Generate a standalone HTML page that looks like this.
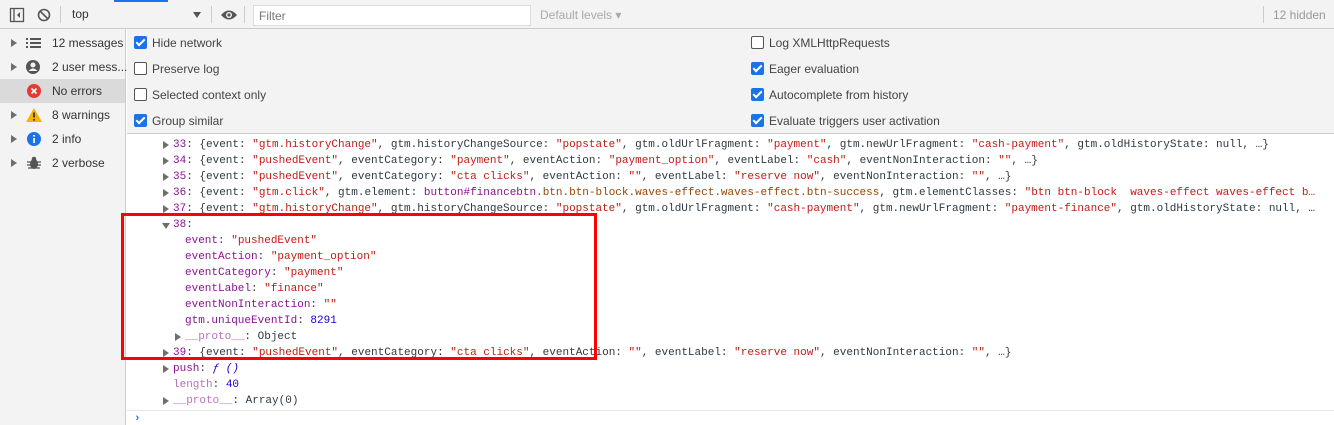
<!DOCTYPE html>
<html><head><meta charset="utf-8"><style>
*{margin:0;padding:0;box-sizing:border-box}
body{width:1334px;height:425px;overflow:hidden;background:#fff;font-family:"Liberation Sans",sans-serif;font-size:12px;color:#303942;position:relative}
.abs{position:absolute}
#tb{left:0;top:0;width:1334px;height:29px;background:#f3f3f3;border-bottom:1px solid #ccc}
.sep{position:absolute;top:6px;width:1px;height:17px;background:#ccc}
#side{left:0;top:29px;width:126px;height:396px;background:#f3f3f3;border-right:1px solid #ccc}
.sr{position:absolute;left:0;width:125px;height:24px;line-height:24px;font-size:12px;color:#333}
.sr .t{position:absolute;left:52px;white-space:nowrap}
.tri{position:absolute;width:0;height:0;border-top:4px solid transparent;border-bottom:4px solid transparent;border-left:6px solid #6e6e6e}
#set{left:127px;top:29px;width:1207px;height:105px;background:#f3f3f3;border-bottom:1px solid #ccc}
.cb{position:absolute;width:13px;height:13px;border-radius:2px}
.cb.on{background:#1a73e8}
.cb.off{border:1px solid #555;background:#fff}
.cb.on::after{content:"";position:absolute;left:4px;top:1px;width:3px;height:7px;border:solid #fff;border-width:0 2px 2px 0;transform:rotate(45deg)}
.cl{position:absolute;font-size:12px;color:#444}
#con{left:127px;top:135px;width:1207px;height:290px;font-family:"Liberation Mono",monospace;font-size:11px;white-space:pre;overflow:hidden}
.ln{position:absolute;height:16px;line-height:16px}
.s{color:#c41a16}.p{color:#881391}.n{color:#1c00cf}.k{color:#303942}.b{color:#994500}.g{color:#999}
.dt{position:absolute;width:0;height:0;border-top:4px solid transparent;border-bottom:4px solid transparent;border-left:6px solid #6e6e6e}
.dd{position:absolute;width:0;height:0;border-left:4px solid transparent;border-right:4px solid transparent;border-top:6px solid #6e6e6e}
</style></head><body>
<div id="tb" class="abs">
  <div class="abs" style="left:114px;top:0;width:54px;height:2px;background:#1a73e8"></div>
  <svg class="abs" style="left:9px;top:7px" width="16" height="16" viewBox="0 0 16 16"><rect x="1.5" y="1.5" width="13" height="13" fill="none" stroke="#555" stroke-width="1.3"/><line x1="5" y1="2" x2="5" y2="14" stroke="#555" stroke-width="1.3"/><path d="M11 5 L8 8 L11 11Z" fill="#555"/></svg>
  <svg class="abs" style="left:37px;top:8px" width="14" height="14" viewBox="0 0 14 14"><circle cx="7" cy="7" r="5.5" fill="none" stroke="#555" stroke-width="1.6"/><line x1="3" y1="3" x2="11" y2="11" stroke="#555" stroke-width="1.6"/></svg>
  <div class="sep" style="left:60px"></div>
  <div class="abs" style="left:72px;top:7px;color:#333">top</div>
  <div class="dd" style="left:193px;top:12px;border-top-color:#555"></div>
  <div class="sep" style="left:211px"></div>
  <svg class="abs" style="left:220px;top:9px" width="18" height="12" viewBox="0 0 18 12"><path d="M1 6 Q9 -3 17 6 Q9 15 1 6Z" fill="#555"/><circle cx="9" cy="6" r="3" fill="#f3f3f3"/><circle cx="9" cy="6" r="1.6" fill="#555"/></svg>
  <div class="sep" style="left:244px"></div>
  <div class="abs" style="left:253px;top:5px;width:278px;height:21px;background:#fff;border:1px solid #ddd;padding:3px 5px;color:#757575">Filter</div>
  <div class="abs" style="left:540px;top:8px;color:#aaa">Default levels ▾</div>
  <div class="sep" style="left:1263px"></div>
  <div class="abs" style="left:1273px;top:8px;color:#999">12 hidden</div>
</div>
<div id="side" class="abs">
  <div class="sr" style="top:2px"><div class="tri" style="left:11px;top:8px"></div>
    <svg class="abs" style="left:26px;top:7px" width="16" height="10"><g fill="#555"><rect x="0" y="0" width="2" height="2"/><rect x="4" y="0" width="11" height="2"/><rect x="0" y="4" width="2" height="2"/><rect x="4" y="4" width="11" height="2"/><rect x="0" y="8" width="2" height="2"/><rect x="4" y="8" width="11" height="2"/></g></svg>
    <span class="t">12 messages</span></div>
  <div class="sr" style="top:26px"><div class="tri" style="left:11px;top:8px"></div>
    <svg class="abs" style="left:26px;top:5px" width="14" height="14"><circle cx="7" cy="7" r="7" fill="#555"/><circle cx="7" cy="5" r="2.5" fill="#f3f3f3"/><path d="M2.5 11 Q7 6 11.5 11" fill="#f3f3f3"/></svg>
    <span class="t">2 user mess...</span></div>
  <div class="sr" style="top:50px;background:#dadada">
    <svg class="abs" style="left:27px;top:5px" width="14" height="14"><circle cx="7" cy="7" r="7" fill="#e53935"/><path d="M4.5 4.5L9.5 9.5M9.5 4.5L4.5 9.5" stroke="#fff" stroke-width="1.6"/></svg>
    <span class="t">No errors</span></div>
  <div class="sr" style="top:74px"><div class="tri" style="left:11px;top:8px"></div>
    <svg class="abs" style="left:26px;top:5px" width="16" height="14"><path d="M8 0 L16 14 L0 14Z" fill="#f4b400"/><rect x="7.2" y="4.5" width="1.6" height="5" fill="#222"/><rect x="7.2" y="11" width="1.6" height="1.6" fill="#222"/></svg>
    <span class="t">8 warnings</span></div>
  <div class="sr" style="top:98px"><div class="tri" style="left:11px;top:8px"></div>
    <svg class="abs" style="left:27px;top:5px" width="14" height="14"><circle cx="7" cy="7" r="7" fill="#1a73e8"/><rect x="6.2" y="6" width="1.7" height="5" fill="#fff"/><rect x="6.2" y="3" width="1.7" height="1.7" fill="#fff"/></svg>
    <span class="t">2 info</span></div>
  <div class="sr" style="top:122px"><div class="tri" style="left:11px;top:8px"></div>
    <svg class="abs" style="left:27px;top:5px" width="14" height="14"><ellipse cx="7" cy="8" rx="4" ry="5" fill="#555"/><circle cx="7" cy="3" r="2.3" fill="#555"/><path d="M0 6h14M0 9h14M1 12h12" stroke="#555" stroke-width="1.3"/></svg>
    <span class="t">2 verbose</span></div>
</div>
<div id="set" class="abs">
  <div class="cb on" style="left:7px;top:7px"></div><div class="cl" style="left:25px;top:7px">Hide network</div>
  <div class="cb off" style="left:7px;top:33px"></div><div class="cl" style="left:25px;top:33px">Preserve log</div>
  <div class="cb off" style="left:7px;top:59px"></div><div class="cl" style="left:25px;top:59px">Selected context only</div>
  <div class="cb on" style="left:7px;top:85px"></div><div class="cl" style="left:25px;top:85px">Group similar</div>
  <div class="cb off" style="left:624px;top:7px"></div><div class="cl" style="left:642px;top:7px">Log XMLHttpRequests</div>
  <div class="cb on" style="left:624px;top:33px"></div><div class="cl" style="left:642px;top:33px">Eager evaluation</div>
  <div class="cb on" style="left:624px;top:59px"></div><div class="cl" style="left:642px;top:59px">Autocomplete from history</div>
  <div class="cb on" style="left:624px;top:85px"></div><div class="cl" style="left:642px;top:85px">Evaluate triggers user activation</div>
</div>
<div id="con" class="abs">
<div class="dt" style="left:36px;top:6px"></div><div class="ln" style="left:46px;top:2px"><span class="p">33</span>: {event: <span class="s">"gtm.historyChange"</span>, gtm.historyChangeSource: <span class="s">"popstate"</span>, gtm.oldUrlFragment: <span class="s">"payment"</span>, gtm.newUrlFragment: <span class="s">"cash-payment"</span>, gtm.oldHistoryState: null, …}</div>
<div class="dt" style="left:36px;top:22px"></div><div class="ln" style="left:46px;top:18px"><span class="p">34</span>: {event: <span class="s">"pushedEvent"</span>, eventCategory: <span class="s">"payment"</span>, eventAction: <span class="s">"payment_option"</span>, eventLabel: <span class="s">"cash"</span>, eventNonInteraction: <span class="s">""</span>, …}</div>
<div class="dt" style="left:36px;top:38px"></div><div class="ln" style="left:46px;top:34px"><span class="p">35</span>: {event: <span class="s">"pushedEvent"</span>, eventCategory: <span class="s">"cta clicks"</span>, eventAction: <span class="s">""</span>, eventLabel: <span class="s">"reserve now"</span>, eventNonInteraction: <span class="s">""</span>, …}</div>
<div class="dt" style="left:36px;top:54px"></div><div class="ln" style="left:46px;top:50px"><span class="p">36</span>: {event: <span class="s">"gtm.click"</span>, gtm.element: <span class="p">button#financebtn</span><span class="b">.btn.btn-block.waves-effect.waves-effect.btn-success</span>, gtm.elementClasses: <span class="s">"btn btn-block  waves-effect waves-effect b…</span></div>
<div class="dt" style="left:36px;top:70px"></div><div class="ln" style="left:46px;top:66px"><span class="p">37</span>: {event: <span class="s">"gtm.historyChange"</span>, gtm.historyChangeSource: <span class="s">"popstate"</span>, gtm.oldUrlFragment: <span class="s">"cash-payment"</span>, gtm.newUrlFragment: <span class="s">"payment-finance"</span>, gtm.oldHistoryState: null, …</div>
<div class="dd" style="left:35px;top:88px"></div><div class="ln" style="left:46px;top:82px"><span class="p">38</span>:</div>
<div class="ln" style="left:58px;top:98px"><span class="p">event</span>: <span class="s">"pushedEvent"</span></div>
<div class="ln" style="left:58px;top:114px"><span class="p">eventAction</span>: <span class="s">"payment_option"</span></div>
<div class="ln" style="left:58px;top:130px"><span class="p">eventCategory</span>: <span class="s">"payment"</span></div>
<div class="ln" style="left:58px;top:146px"><span class="p">eventLabel</span>: <span class="s">"finance"</span></div>
<div class="ln" style="left:58px;top:162px"><span class="p">eventNonInteraction</span>: <span class="s">""</span></div>
<div class="ln" style="left:58px;top:178px"><span class="p">gtm.uniqueEventId</span>: <span class="n">8291</span></div>
<div class="dt" style="left:48px;top:198px"></div><div class="ln" style="left:58px;top:194px"><span class="p" style="opacity:.6">__proto__</span>: Object</div>
<div class="dt" style="left:36px;top:214px"></div><div class="ln" style="left:46px;top:210px"><span class="p">39</span>: {event: <span class="s">"pushedEvent"</span>, eventCategory: <span class="s">"cta clicks"</span>, eventAction: <span class="s">""</span>, eventLabel: <span class="s">"reserve now"</span>, eventNonInteraction: <span class="s">""</span>, …}</div>
<div class="dt" style="left:36px;top:230px"></div><div class="ln" style="left:46px;top:226px"><span class="p">push</span>: <span class="n" style="font-style:italic">ƒ ()</span></div>
<div class="ln" style="left:46px;top:242px"><span class="p" style="opacity:.6">length</span>: <span class="n">40</span></div>
<div class="dt" style="left:36px;top:262px"></div><div class="ln" style="left:46px;top:258px"><span class="p" style="opacity:.6">__proto__</span>: Array(0)</div>
<div class="abs" style="left:0;top:275px;width:1207px;height:1px;background:#e8e8e8"></div>
<div class="ln" style="left:7px;top:276px;color:#1a73e8;font-weight:bold">›</div>
</div>
<div class="abs" style="left:121px;top:213px;width:476px;height:147px;border:3px solid #ff0000"></div>
</body></html>
